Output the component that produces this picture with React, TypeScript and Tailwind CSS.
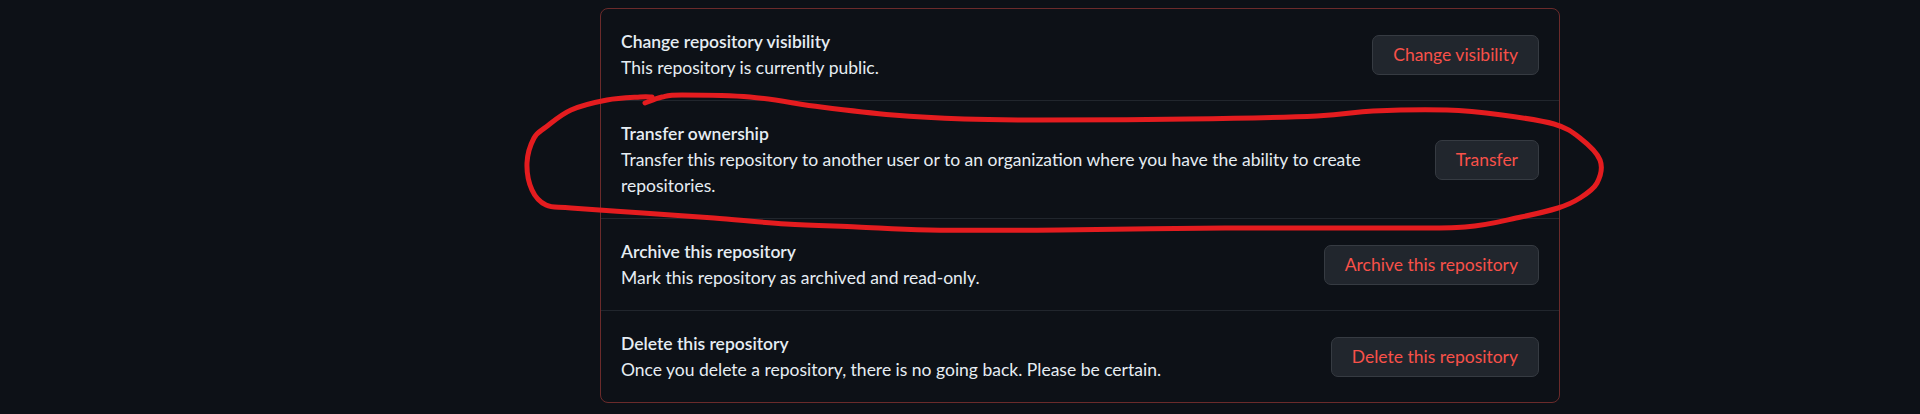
import React from "react";

type Item = {
  title: string;
  description: string;
  action: string;
};

const items: Item[] = [
  {
    title: "Change repository visibility",
    description: "This repository is currently public.",
    action: "Change visibility",
  },
  {
    title: "Transfer ownership",
    description:
      "Transfer this repository to another user or to an organization where you have the ability to create repositories.",
    action: "Transfer",
  },
  {
    title: "Archive this repository",
    description: "Mark this repository as archived and read-only.",
    action: "Archive this repository",
  },
  {
    title: "Delete this repository",
    description:
      "Once you delete a repository, there is no going back. Please be certain.",
    action: "Delete this repository",
  },
];

// hand-drawn annotation around the transfer row
const loop: [number, number][] = [
  [645, 103], [662, 97], [682, 95], [750, 97], [821, 107], [893, 115],
  [964, 119], [1040, 120], [1188, 119], [1317, 116], [1373, 111],
  [1447, 110], [1502, 115], [1554, 124], [1580, 138], [1600, 160],
  [1597, 183], [1580, 198], [1558, 208], [1521, 217], [1465, 227],
  [1373, 228], [1225, 228], [1060, 230], [929, 230], [857, 227],
  [786, 224], [714, 218], [643, 213], [571, 208], [546, 205], [532, 190],
  [527, 163], [534, 138], [546, 127], [571, 110], [607, 100], [640, 97],
  [652, 97],
];

function smoothPath(pts: [number, number][]) {
  let d = `M ${pts[0][0]} ${pts[0][1]}`;
  for (let i = 0; i < pts.length - 1; i++) {
    const p0 = pts[i - 1] || pts[i];
    const p1 = pts[i];
    const p2 = pts[i + 1];
    const p3 = pts[i + 2] || p2;
    const c1x = p1[0] + (p2[0] - p0[0]) / 6;
    const c1y = p1[1] + (p2[1] - p0[1]) / 6;
    const c2x = p2[0] - (p3[0] - p1[0]) / 6;
    const c2y = p2[1] - (p3[1] - p1[1]) / 6;
    d += ` C ${c1x} ${c1y} ${c2x} ${c2y} ${p2[0]} ${p2[1]}`;
  }
  return d;
}

function DangerRow({ item, first }: { item: Item; first: boolean }) {
  return (
    <div
      className={`flex items-center justify-between gap-5 px-5 py-[19.5px] ${
        first ? "" : "border-t border-[#21262d]"
      }`}
    >
      <div className="min-w-0 flex-1">
        <div className="font-semibold text-[#e6edf3]">{item.title}</div>
        <div className="text-[#e6edf3]">{item.description}</div>
      </div>
      <button className="h-10 shrink-0 rounded-[7px] border border-[#363b42] bg-[#21262d] px-5 font-normal text-[#f85149]">
        {item.action}
      </button>
    </div>
  );
}

export default function App() {
  return (
    <div
      className="relative h-[414px] w-full overflow-hidden bg-[#0d1117] text-[17.5px] leading-[26px]"
      style={{ fontFamily: "Lato, 'Liberation Sans', sans-serif" }}
    >
      <div className="flex pt-2">
        <div className="w-[600px] shrink-0" />
        <section className="w-[960px] rounded-[8px] border border-[#6b2b2b]">
          {items.map((item, i) => (
            <DangerRow key={item.title} item={item} first={i === 0} />
          ))}
        </section>
      </div>

      <svg
        className="pointer-events-none absolute left-0 top-0"
        width="1920"
        height="414"
        viewBox="0 0 1920 414"
      >
        <path
          d={smoothPath(loop)}
          fill="none"
          stroke="#e41c1f"
          strokeWidth="5"
          strokeLinecap="round"
          strokeLinejoin="round"
        />
      </svg>
    </div>
  );
}
